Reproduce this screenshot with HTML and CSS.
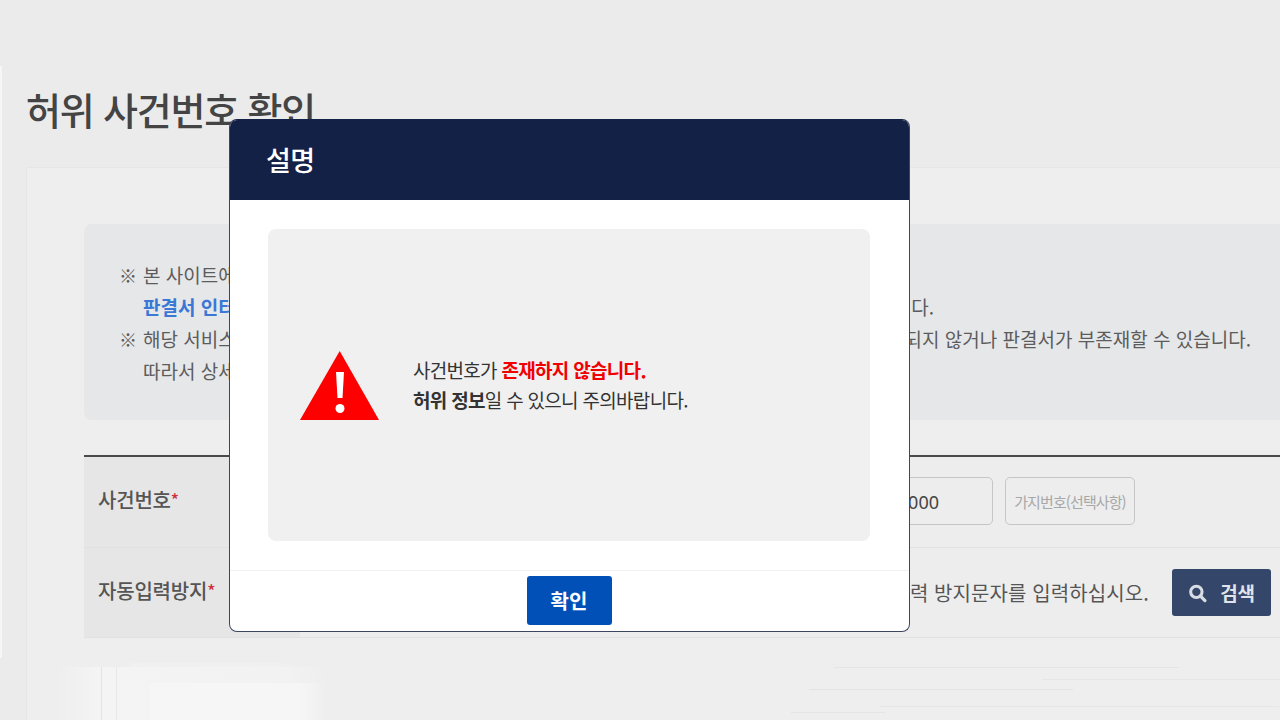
FILE: index.html
```html
<!DOCTYPE html>
<html lang="ko">
<head>
<meta charset="utf-8">
<title>허위 사건번호 확인</title>
<link rel="stylesheet" href="styles.css">
</head>
<body>
<div class="top-band"></div>
<main class="page">
  <h1 class="page-title">허위 사건번호 확인</h1>
  <section class="card">
    <div class="card-content">
      <div class="notice">
        <p class="notice-line"><span class="mark">※</span><span class="notice-text">본 사이트에서 제공하는 사건번호를 확인합니다.</span></p>
        <p class="notice-line indent"><span class="notice-text"><b class="link">판결서 인터넷 열람</b></span><span class="notice-end notice-end-mid">다.</span></p>
        <p class="notice-line"><span class="mark">※</span><span class="notice-text">해당 서비스는 참고용입니다.</span><span class="notice-end">되지 않거나 판결서가 부존재할 수 있습니다.</span></p>
        <p class="notice-line indent"><span class="notice-text">따라서 상세 내용을 확인하십시오.</span></p>
      </div>
      <div class="form-table">
        <div class="form-row">
          <div class="form-label">사건번호<span class="req">*</span></div>
          <div class="form-value">
            <div class="field field-main">000000</div>
            <div class="field field-sub">가지번호(선택사항)</div>
          </div>
        </div>
        <div class="form-row form-row-last">
          <div class="form-label form-label-last">자동입력방지<span class="req">*</span></div>
          <div class="form-value form-value-captcha">
            <span class="hint">자동입력 방지문자를 입력하십시오.</span>
            <button class="search-btn" type="button">
              <svg class="search-icon" viewBox="0 0 20 20" aria-hidden="true"><circle cx="8.8" cy="8.8" r="6" fill="none" stroke="#d8dce4" stroke-width="3.2"/><path d="M13.2 13.2l4.6 4.8" stroke="#d8dce4" stroke-width="3.4" stroke-linecap="round"/></svg>
              <span>검색</span>
            </button>
          </div>
        </div>
      </div>
    </div>
    <div class="card-foot"></div>
  </section>
</main>

<div class="modal" role="dialog">
  <header class="modal-head">설명</header>
  <div class="modal-body">
    <div class="alert-box">
      <svg class="alert-icon" viewBox="0 0 79 69" aria-hidden="true">
        <path d="M39.7 0L79 69H0Z" fill="#ff0000"/>
        <path d="M36 21h8l-1.5 26h-5Z" fill="#fff"/>
        <circle cx="40" cy="57.5" r="4.5" fill="#fff"/>
      </svg>
      <div class="alert-text">
        <p>사건번호가 <b class="danger">존재하지 않습니다.</b></p>
        <p><b>허위 정보</b>일 수 있으니 주의바랍니다.</p>
      </div>
    </div>
  </div>
  <footer class="modal-foot"><button class="ok-btn" type="button">확인</button></footer>
</div>
</body>
</html>
```

FILE: styles.css
```css
* { box-sizing: border-box; }
html, body { margin: 0; height: 720px; overflow: hidden; }
body {
  font-family: "Noto Sans CJK KR", "Noto Sans", sans-serif;
  color: #555;
  background: linear-gradient(#f6f6f6, #f6f6f6) 0 66px / 2px 592px no-repeat, #ebebeb;
}
.top-band { height: 66px; }
.page { padding-left: 26px; }
.page-title {
  margin: 0;
  height: 101px;
  padding-top: 16px;
  font-size: 38px;
  line-height: 54px;
  font-weight: 500;
  letter-spacing: -1.2px;
  color: #444;
}
.card {
  height: 553px;
  background: #eeeeee;
  border-top: 1px solid #e6e6e6;
  border-left: 1px solid #e6e6e6;
}
.card-content { padding: 56px 0 0 57px; }
.notice {
  height: 196px;
  padding: 35px 29px 0 35px;
  background: #e6e7e9;
  border-radius: 8px 0 0 8px;
  font-size: 19px;
  letter-spacing: 0;
  color: #5c5c5c;
}
.notice-line { margin: 0; height: 32px; line-height: 32px; display: flex; }
.indent { padding-left: 24px; }
.mark { width: 24px; flex: none; font-size: 18px; }
.notice-end { margin-left: auto; }
.notice-end-mid { margin-right: 317px; }
.link { color: #3b78d6; font-weight: 700; }
.form-table { margin-top: 35px; border-top: 2px solid #4a4a4a; }
.form-row { display: flex; height: 91px; border-bottom: 1px solid #e1e1e1; }
.form-row-last { height: 90px; }
.form-label {
  width: 216px;
  flex: none;
  display: flex;
  align-items: center;
  padding: 0 0 6px 14px;
  background: #e6e6e6;
  font-size: 20px;
  font-weight: 500;
  letter-spacing: -0.2px;
}
.form-label-last { padding-bottom: 4px; }
.req { color: #d0303c; align-self: center; font-size: 17px; }
.form-value {
  flex: 1;
  display: flex;
  align-items: center;
  justify-content: flex-end;
  gap: 12px;
  padding-right: 145px;
  padding-bottom: 2px;
  background: #ededed;
}
.field {
  height: 48px;
  border: 1px solid #c6c6c6;
  border-radius: 5px;
  line-height: 48px;
  white-space: nowrap;
}
.field-main {
  width: 290px;
  padding-right: 53px;
  text-align: right;
  font-size: 18px;
  color: #444;
  font-family: "Noto Sans", sans-serif;
}
.field-sub {
  width: 130px;
  text-align: center;
  font-size: 15px;
  letter-spacing: -0.9px;
  color: #a8a8a8;
}
.form-value-captcha { gap: 23px; padding-right: 9px; padding-bottom: 0; }
.hint { font-size: 20px; letter-spacing: 0.1px; }
.search-btn {
  display: flex;
  align-items: center;
  justify-content: center;
  gap: 13px;
  width: 99px;
  height: 47px;
  padding: 0;
  border: 0;
  border-radius: 3px;
  background: #34476a;
  color: #e0e3e8;
  font: 700 19px "Noto Sans CJK KR", sans-serif;
  letter-spacing: -0.2px;
}
.search-icon { width: 19px; height: 20px; }
.card-foot {
  height: 82px;
  background:
    linear-gradient(#e4e4e4, #e4e4e4) 807px 29px / 345px 1px no-repeat,
    linear-gradient(#e6e6e6, #e6e6e6) 1015px 41px / 240px 1px no-repeat,
    linear-gradient(#e4e4e4, #e4e4e4) 782px 51px / 264px 1px no-repeat,
    linear-gradient(#e6e6e6, #e6e6e6) 852px 68px / 400px 1px no-repeat,
    linear-gradient(#e4e4e4, #e4e4e4) 764px 74px / 94px 1px no-repeat,
    linear-gradient(#e4e4e4, #e4e4e4) 74px 29px / 1px 53px no-repeat,
    linear-gradient(#e8e8e8, #e8e8e8) 89px 29px / 1px 53px no-repeat,
    linear-gradient(90deg, #f6f6f6 85%, #eeeeee) 123px 45px / 176px 37px no-repeat,
    linear-gradient(90deg, #eeeeee, #f4f4f4 15%, #f2f2f2 85%, #eeeeee) 30px 29px / 270px 53px no-repeat,
    linear-gradient(90deg, #f0f0f0 80%, #eeeeee) 103px 25px / 176px 6px no-repeat;
}

.modal {
  position: absolute;
  left: 229px;
  top: 119px;
  width: 681px;
  height: 513px;
  display: flex;
  flex-direction: column;
  background: #fff;
  border: 1px solid #3d465e;
  border-top-color: #142147;
  border-radius: 8px;
  overflow: hidden;
}
.modal-head {
  height: 80px;
  flex: none;
  padding: 0 0 0 36px;
  background: #142147;
  color: #fff;
  font-size: 27px;
  line-height: 80px;
  font-weight: 500;
  letter-spacing: -0.5px;
}
.modal-body { flex: 1; padding: 29px 39px 29px 38px; }
.alert-box {
  height: 312px;
  display: flex;
  align-items: center;
  gap: 34px;
  padding: 0 0 0 32px;
  background: #f0f0f0;
  border-radius: 8px;
}
.alert-icon { width: 79px; height: 69px; flex: none; margin-top: 1px; }
.alert-text { font-size: 19px; letter-spacing: -0.7px; color: #333; }
.alert-text p { margin: 0; height: 30px; line-height: 30px; }
.danger { color: #f00000; }
.modal-foot {
  height: 61px;
  flex: none;
  display: flex;
  justify-content: center;
  padding-top: 5px;
  border-top: 1px solid #f2f2f2;
}
.ok-btn {
  width: 85px;
  height: 49px;
  margin-right: 1px;
  border: 0;
  border-radius: 3px;
  background: #0050b8;
  color: #fff;
  font: 700 20px "Noto Sans CJK KR", sans-serif;
}
```
